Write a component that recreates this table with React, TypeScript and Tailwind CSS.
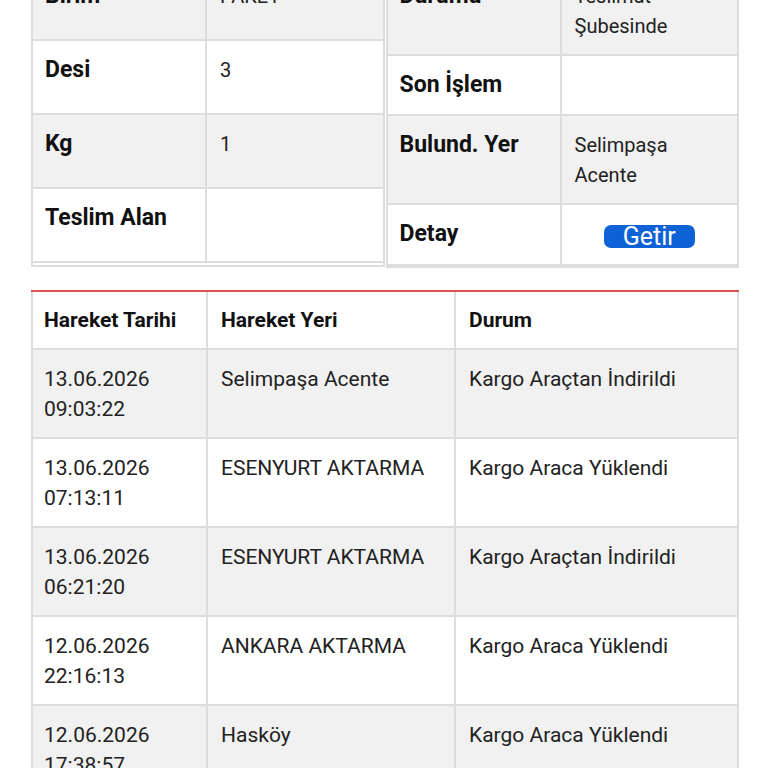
import React from 'react';

interface InfoRow {
  label: string;
  value?: React.ReactNode;
  h: string;
}

const leftRows: InfoRow[] = [
  { label: 'Birim', value: 'PAKET', h: 'h-[74px]' },
  { label: 'Desi', value: '3', h: 'h-[74px]' },
  { label: 'Kg', value: '1', h: 'h-[74px]' },
  { label: 'Teslim Alan', value: '', h: 'h-[74px]' },
];

const rightRows: InfoRow[] = [
  { label: 'Durumu', value: <>Teslimat<br />Şubesinde</>, h: 'h-[89px]' },
  { label: 'Son İşlem', value: '', h: 'h-[60px]' },
  { label: 'Bulund. Yer', value: <>Selimpaşa<br />Acente</>, h: 'h-[89px]' },
  { label: 'Detay', value: 'btn', h: 'h-[61px]' },
];

const moves = [
  { date: '13.06.2026', time: '09:03:22', place: 'Selimpaşa Acente', status: 'Kargo Araçtan İndirildi' },
  { date: '13.06.2026', time: '07:13:11', place: 'ESENYURT AKTARMA', status: 'Kargo Araca Yüklendi' },
  { date: '13.06.2026', time: '06:21:20', place: 'ESENYURT AKTARMA', status: 'Kargo Araçtan İndirildi' },
  { date: '12.06.2026', time: '22:16:13', place: 'ANKARA AKTARMA', status: 'Kargo Araca Yüklendi' },
  { date: '12.06.2026', time: '17:38:57', place: 'Hasköy', status: 'Kargo Araca Yüklendi' },
];

const InfoTable: React.FC<{ rows: InfoRow[]; tail?: boolean }> = ({ rows, tail }) => (
  <div className="w-[354px] border-2 border-t-0 border-[#dddddd]">
    {rows.map((r, i) => (
      <div
        key={r.label}
        className={`flex ${r.h} border-b-2 border-[#dddddd] ${i % 2 === 0 ? 'bg-[#f1f1f1]' : 'bg-white'}`}
      >
        <div className="w-[174px] shrink-0 border-r-2 border-[#dddddd] pl-[12px] pt-[14px] text-[23px] font-bold leading-[30px] text-[#111]">
          {r.label}
        </div>
        <div className="flex-1 pl-[13px] pt-[14px] text-[20px] leading-[30px] text-[#222]">
          {r.value === 'btn' ? (
            <div className="flex justify-center pr-[13px] pt-[6px]">
              <span className="flex h-[23px] w-[91px] items-center justify-center rounded-[7px] bg-[#0f62d6] text-[25px] leading-none text-white">
                Getir
              </span>
            </div>
          ) : (
            r.value
          )}
        </div>
      </div>
    ))}
    {tail && <div className="h-[2px] bg-white" />}
  </div>
);

export default function App() {
  return (
    <div className="h-[768px] w-[768px] overflow-hidden bg-white" style={{ fontFamily: 'Roboto, "Noto Sans", sans-serif' }}>
      <div className="-mt-[33px] pl-[31px] pr-[29px]">
        <div className="flex items-start gap-[1px]">
          <InfoTable rows={leftRows} tail />
          <InfoTable rows={rightRows} />
        </div>

        <div className="mt-[22px] w-[708px] border-2 border-t-0 border-[#dddddd]">
          <div className="h-[2px] bg-[#d9534f] -mx-[2px]" />
          <div className="flex h-[58px] border-b-2 border-[#dddddd] bg-white text-[21px] font-bold leading-[30px] text-[#111]">
            <div className="w-[175px] shrink-0 border-r-2 border-[#dddddd] pl-[11px] pt-[13px]">Hareket Tarihi</div>
            <div className="w-[248px] shrink-0 border-r-2 border-[#dddddd] pl-[13px] pt-[13px]">Hareket Yeri</div>
            <div className="flex-1 pl-[13px] pt-[13px]">Durum</div>
          </div>
          {moves.map((m, i) => (
            <div
              key={m.time}
              className={`flex h-[89px] border-b-2 border-[#dddddd] text-[21px] leading-[30px] text-[#222] ${i % 2 === 0 ? 'bg-[#f1f1f1]' : 'bg-white'}`}
            >
              <div className="w-[175px] shrink-0 border-r-2 border-[#dddddd] pl-[11px] pt-[14px]">
                {m.date}
                <br />
                {m.time}
              </div>
              <div className="w-[248px] shrink-0 border-r-2 border-[#dddddd] pl-[13px] pt-[14px]">{m.place}</div>
              <div className="flex-1 pl-[13px] pt-[14px]">{m.status}</div>
            </div>
          ))}
        </div>
      </div>
    </div>
  );
}
